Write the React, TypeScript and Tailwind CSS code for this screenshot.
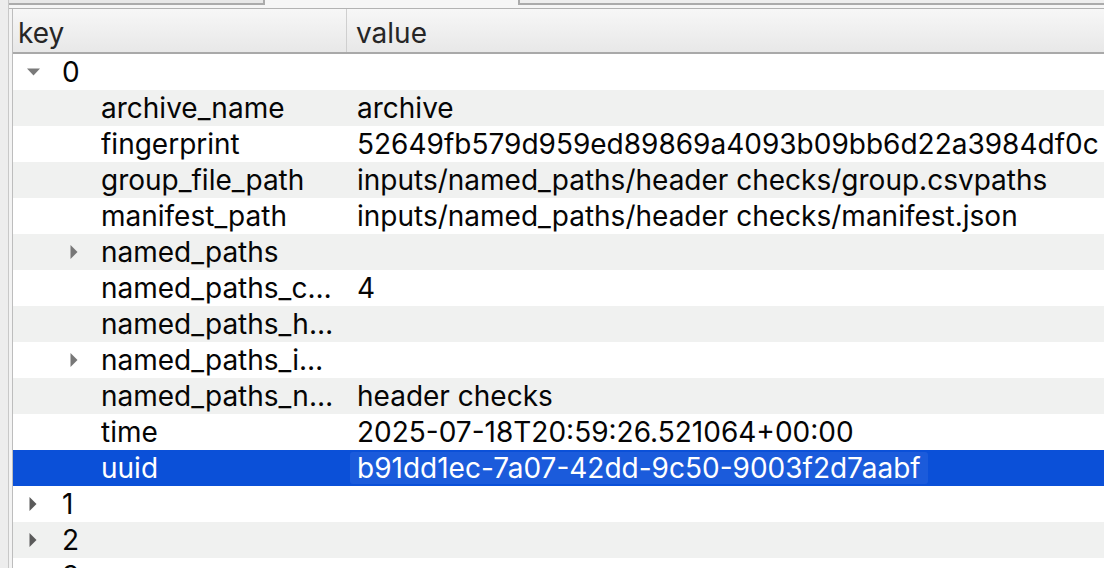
import React from "react";

type Row = {
  key: string;
  value?: string;
  level: 0 | 1;
  arrow?: "down" | "right";
  selected?: boolean;
};

const rows: Row[] = [
  { key: "0", level: 0, arrow: "down" },
  { key: "archive_name", value: "archive", level: 1 },
  { key: "fingerprint", value: "52649fb579d959ed89869a4093b09bb6d22a3984df0c", level: 1 },
  { key: "group_file_path", value: "inputs/named_paths/header checks/group.csvpaths", level: 1 },
  { key: "manifest_path", value: "inputs/named_paths/header checks/manifest.json", level: 1 },
  { key: "named_paths", level: 1, arrow: "right" },
  { key: "named_paths_count", value: "4", level: 1 },
  { key: "named_paths_hash", level: 1 },
  { key: "named_paths_identity", level: 1, arrow: "right" },
  { key: "named_paths_name", value: "header checks", level: 1 },
  { key: "time", value: "2025-07-18T20:59:26.521064+00:00", level: 1 },
  { key: "uuid", value: "b91dd1ec-7a07-42dd-9c50-9003f2d7aabf", level: 1, selected: true },
  { key: "1", level: 0, arrow: "right" },
  { key: "2", level: 0, arrow: "right" },
  { key: "3", level: 0, arrow: "right" },
];

function Arrow({ dir, light }: { dir: "down" | "right"; light?: boolean }) {
  if (dir === "down") {
    return (
      <svg width="13" height="8" viewBox="0 0 13 8" className="shrink-0">
        <path d="M0 0.5 L13 0.5 L6.5 7.5 Z" fill="#7a7a7a" />
      </svg>
    );
  }
  return (
    <svg width="8" height="14" viewBox="0 0 8 14" className="shrink-0">
      <path d="M0.5 0 L7.5 7 L0.5 14 Z" fill={light ? "#777777" : "#5a5a5a"} />
    </svg>
  );
}

function TreeRow({ row, index }: { row: Row; index: number }) {
  const bg = row.selected ? "bg-[#0b50d8]" : index % 2 === 1 ? "bg-[#f0f1f0]" : "bg-white";
  const text = row.selected ? "text-white" : "text-[#050505]";
  return (
    <div className={`flex h-[36px] shrink-0 items-center leading-[34px] ${bg} ${text}`}>
      <div className="flex h-full w-[334px] shrink-0 items-center overflow-hidden">
        {row.level === 0 ? (
          <>
            <div className="flex w-[49px] shrink-0 items-center">
              <div className="flex w-[40px] justify-center">
                {row.arrow && <Arrow dir={row.arrow} />}
              </div>
            </div>
            <span className="whitespace-nowrap">{row.key}</span>
          </>
        ) : (
          <>
            <div className="flex w-[88px] shrink-0 items-center pl-[57px]">
              {row.arrow && <Arrow dir={row.arrow} light />}
            </div>
            <span className="min-w-0 overflow-hidden text-ellipsis whitespace-nowrap pr-[9px]">
              {row.key}
            </span>
          </>
        )}
      </div>
      <div className="flex h-full min-w-0 flex-1 items-center overflow-hidden pl-[3px]">
        {row.value !== undefined &&
          (row.selected ? (
            <span className="flex h-[32px] items-center whitespace-nowrap rounded-[3px] bg-[#1b5bdb] px-[7px]">
              {row.value}
            </span>
          ) : (
            <span className="whitespace-nowrap pl-[7px]">{row.value}</span>
          ))}
      </div>
    </div>
  );
}

export default function App() {
  return (
    <div
      className="flex h-[568px] w-[1104px] overflow-hidden bg-[#ececec] text-[28px] leading-none"
      style={{ fontFamily: "Inter, 'Liberation Sans', sans-serif" }}
    >
      <div className="w-[8px] shrink-0 bg-[#ededed]" />
      <div className="flex min-w-0 flex-1 flex-col border-l border-[#c8c8c8]">
        {/* tab strip */}
        <div className="flex h-[8px] shrink-0 bg-[#f6f6f6]">
          <div className="h-[5px] w-[256px] shrink-0 border-b-2 border-r-2 border-[#ababab] bg-[#e8e8e8]" />
          <div className="w-[253px] shrink-0" />
          <div className="h-[5px] flex-1 border-b-2 border-l-2 border-[#ababab] bg-[#eeeeee]" />
        </div>
        <div className="flex min-h-0 flex-1 border-t border-[#b3b3b3]">
          <div className="w-[3px] shrink-0 bg-[#f3f3f3]" />
          <div className="flex min-w-0 flex-1 flex-col border-l border-[#bdbdbd] bg-white">
            {/* header */}
            <div className="flex h-[45px] shrink-0 border-b-2 border-[#a9a9a9] bg-gradient-to-b from-[#f7f7f7] to-[#e8e8e8] text-[#262626]">
              <div className="flex w-[334px] shrink-0 items-center border-r border-[#cfcfcf] pl-[5px] pt-[4px]">
                key
              </div>
              <div className="flex flex-1 items-center pl-[9px] pt-[4px]">value</div>
            </div>
            {rows.map((r, i) => (
              <TreeRow key={r.key} row={r} index={i} />
            ))}
          </div>
        </div>
      </div>
    </div>
  );
}
